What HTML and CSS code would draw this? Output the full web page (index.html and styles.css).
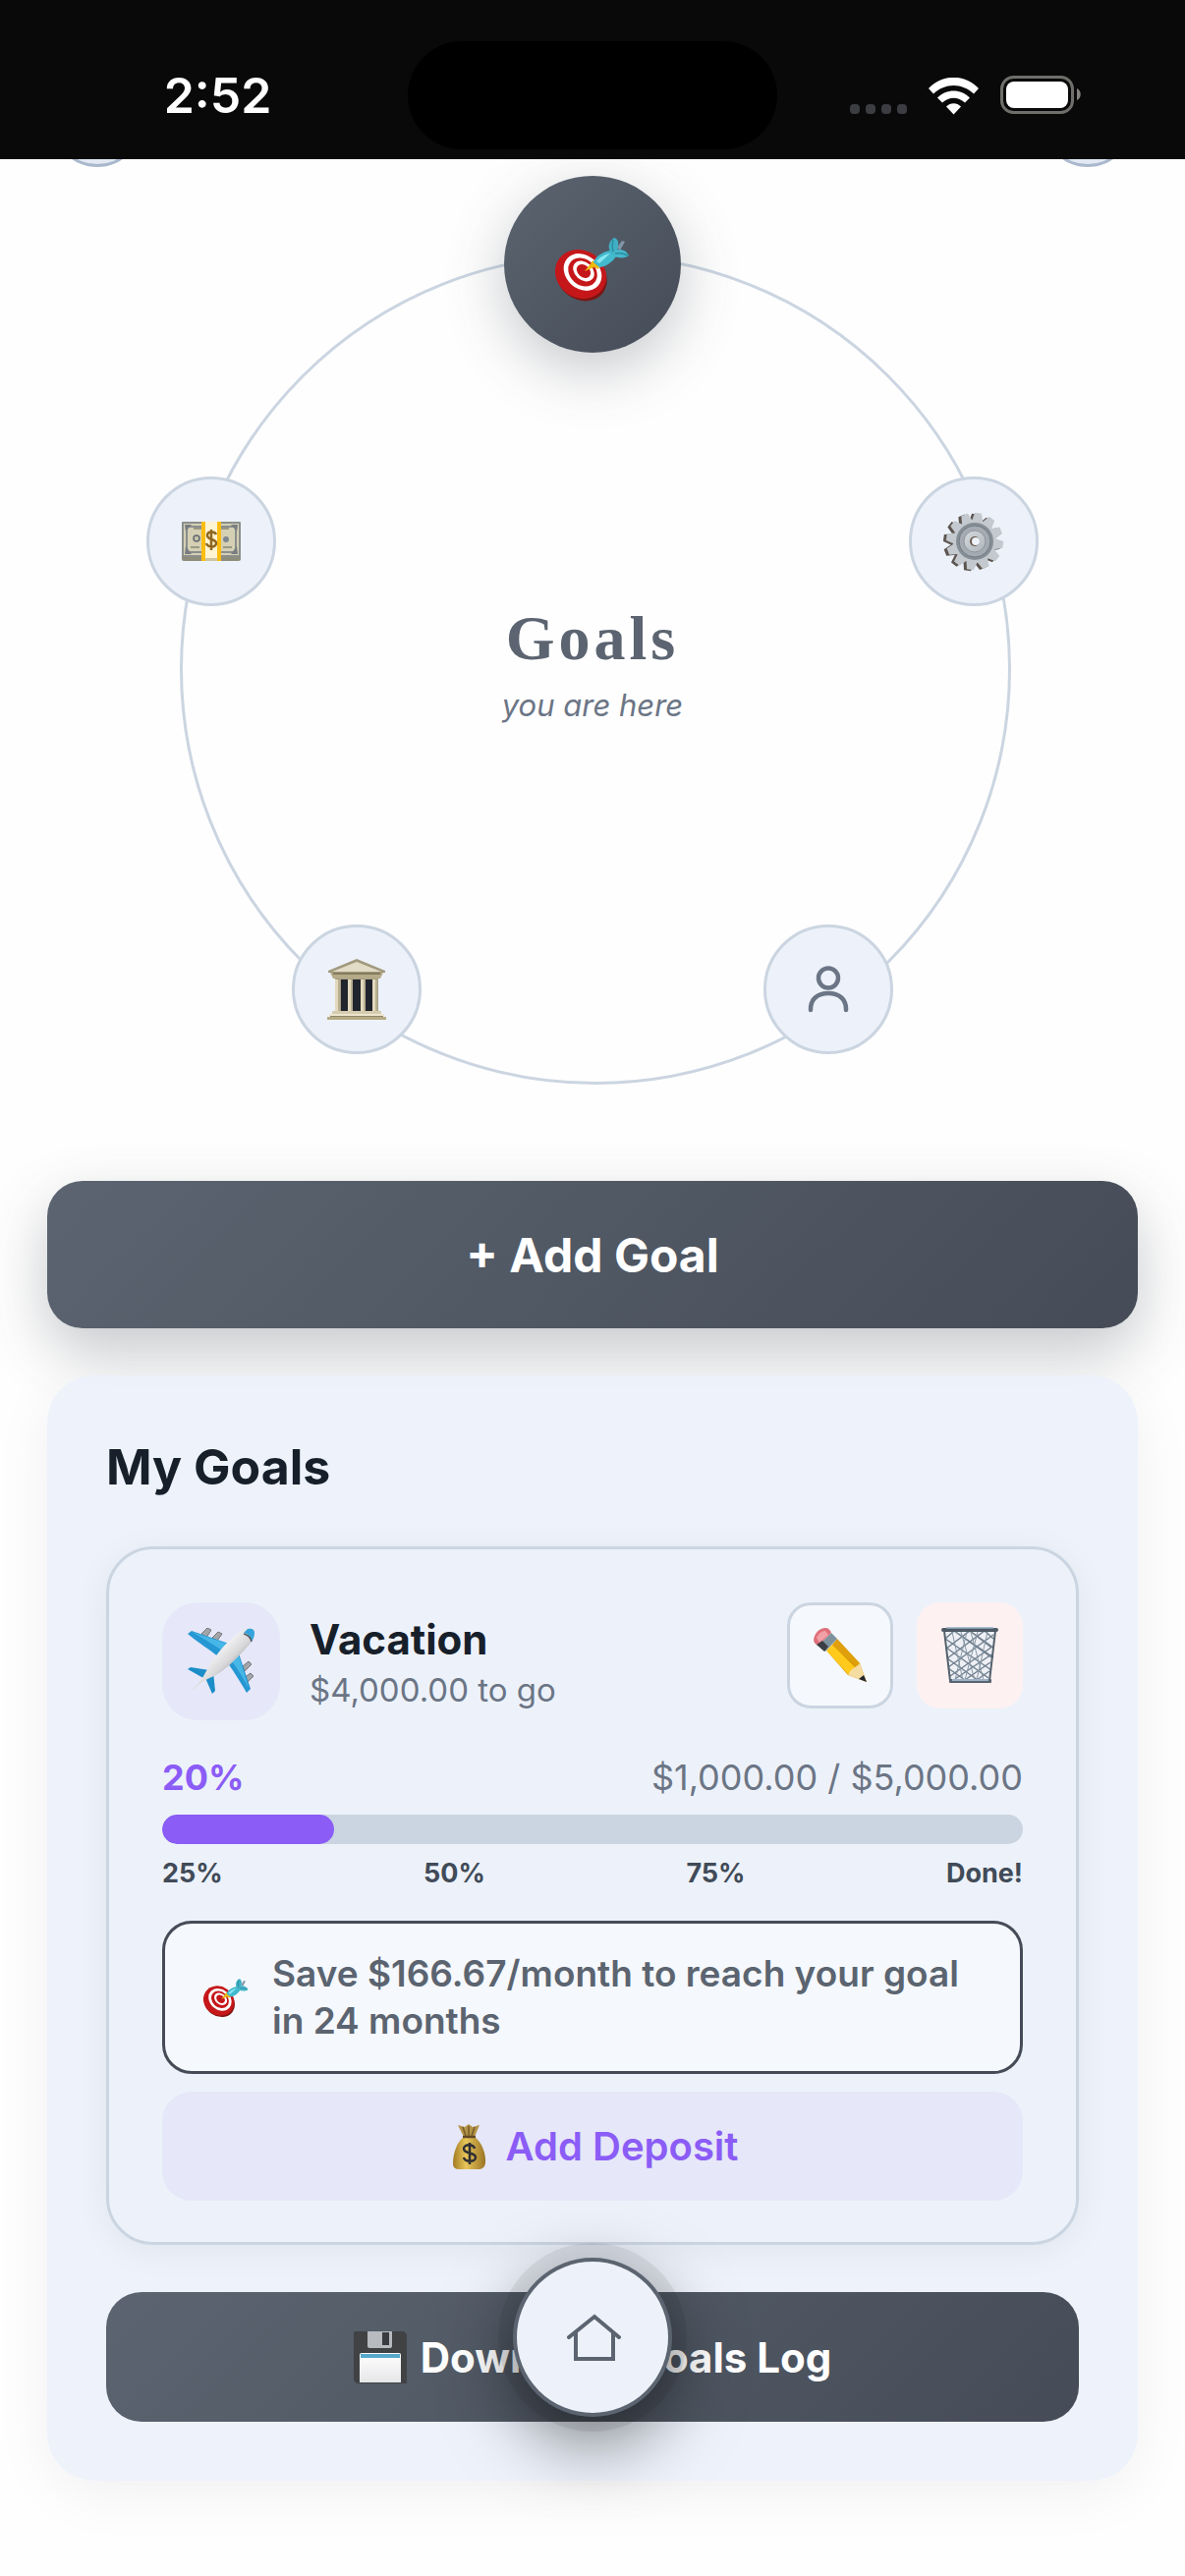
FILE: index.html
```html
<!DOCTYPE html>
<html lang="en">
<head>
    <meta charset="UTF-8">
    <meta name="viewport" content="width=device-width, initial-scale=1.0">
    <title>Goals</title>
    <link rel="stylesheet" href="styles.css">
</head>
<body>

    <!-- Shared icons and fills -->
    <svg class="sprite" width="0" height="0" aria-hidden="true">
        <defs>
            <linearGradient id="metal" x1="0" y1="0" x2="1" y2="1">
                <stop offset="0" stop-color="#d5dade"/>
                <stop offset="1" stop-color="#aeb5bb"/>
            </linearGradient>
            <linearGradient id="fuselage" x1="0" y1="0" x2="1" y2="1">
                <stop offset="0.3" stop-color="#ffffff"/>
                <stop offset="0.55" stop-color="#d8d8da"/>
                <stop offset="0.8" stop-color="#77787c"/>
            </linearGradient>
            <linearGradient id="gold" x1="0" y1="0" x2="1" y2="0">
                <stop offset="0" stop-color="#a37a22"/>
                <stop offset="0.4" stop-color="#e8c65a"/>
                <stop offset="1" stop-color="#9a7425"/>
            </linearGradient>
            <linearGradient id="paper" x1="0" y1="0" x2="0" y2="1">
                <stop offset="0" stop-color="#ffffff"/>
                <stop offset="1" stop-color="#e6e6e8"/>
            </linearGradient>
            <symbol id="target" viewBox="0 -5 76 74">
                <ellipse cx="27" cy="40" rx="27" ry="23" fill="#7d1512" transform="rotate(35 27 40)"/>
                <ellipse cx="26" cy="37" rx="27" ry="24" fill="#c5171a" transform="rotate(35 26 37)"/>
                <ellipse cx="28" cy="35" rx="21" ry="17" fill="#fff" transform="rotate(42 28 35)"/>
                <ellipse cx="28" cy="35" rx="16" ry="13" fill="#c5171a" transform="rotate(42 28 35)"/>
                <ellipse cx="29" cy="34" rx="12" ry="9" fill="#fff" transform="rotate(42 29 34)"/>
                <ellipse cx="29" cy="34" rx="8" ry="6" fill="#c5171a" transform="rotate(42 29 34)"/>
                <path d="M30 34l8-10 4 5z" fill="#edb90f"/>
                <path d="M37 24l3-1 5 6-1 3-6-3z" fill="#edb90f"/>
                <path d="M63 10l5-7 3 1-5 9z" fill="#8195a8"/>
                <path d="M39 25c1-5 9-11 18-12l5 6c-4 6-11 11-17 11z" fill="#42b9cd"/>
                <path d="M42 24c3-4 8-7 14-8l-11 10z" fill="#86e7f2"/>
                <path d="M56 14c-3-5-1-11 4-14 5 1 5 7 3 14l-4 3z" fill="#3eafc4"/>
                <path d="M59 14c6-4 13-2 16 4-5 4-11 2-15 1z" fill="#46b7cb"/>
                <path d="M59 2c-1 4-1 8 0 12M61 16c5-1 9 0 13 2" fill="none" stroke="#2b8da2" stroke-width="1.500"/>
            </symbol>
        </defs>
    </svg>

    <header class="status-bar">
        <span class="status-time">2:52</span>
        <div class="island"></div>
        <div class="status-icons">
            <svg class="signal" viewBox="0 0 58 10" fill="#3b3d42">
                <rect width="10" height="10" rx="4"/>
                <rect x="16" width="10" height="10" rx="4"/>
                <rect x="32" width="10" height="10" rx="4"/>
                <rect x="48" width="10" height="10" rx="4"/>
            </svg>
            <svg class="wifi" viewBox="0 0 51 38" fill="#fff">
                <path d="M0 11C14-4 37-4 51 11L46 16.500C34 5 17 5 5 16.500z"/>
                <path d="M9 20.500C18 11 33 11 42 20.500L37 25.500C30 19 21 19 14 25.500z"/>
                <path d="M18 29.500C22 25 29 25 33 29.500L25.500 37.500z"/>
            </svg>
            <svg class="battery" viewBox="0 0 83 40">
                <rect x="1.500" y="1.500" width="72" height="36" rx="12" fill="none" stroke="#6f6e6b" stroke-width="3"/>
                <rect x="6" y="6" width="63" height="27" rx="8" fill="#fff"/>
                <path d="M78 13c5 2 5 10 0 12z" fill="#83827f"/>
            </svg>
        </div>
    </header>

    <main>
        <nav class="orbit" aria-label="Sections">
            <span class="peek peek-left"></span>
            <span class="peek peek-right"></span>
            <div class="ring"></div>

            <div class="orbit-label">
                <h1>Goals</h1>
                <p>you are here</p>
            </div>

            <button class="node node-active" aria-label="Goals">
                <svg width="76" height="74"><use href="#target"/></svg>
            </button>
            <button class="node node-settings" aria-label="Settings">
                <svg width="62" height="62" viewBox="-31 -31 62 62">
                    <defs>
                        <path id="teeth" d="M-6-19l2-10h7l3 10zM-6 19l2 10h7l3-10zM19-6l10 2v7l-10 3zM-19-6l-10 2v7l10 3z"/>
                    </defs>
                    <g fill="#5d5550" transform="translate(-2 1) rotate(8)">
                        <circle r="21"/>
                        <use href="#teeth"/>
                        <use href="#teeth" transform="rotate(30)"/>
                        <use href="#teeth" transform="rotate(60)"/>
                    </g>
                    <g fill="#c3c9ce" transform="translate(1 0) rotate(8)">
                        <circle r="22"/>
                        <use href="#teeth"/>
                        <use href="#teeth" transform="rotate(30)"/>
                        <use href="#teeth" transform="rotate(60)"/>
                    </g>
                    <circle cx="1" r="19" fill="#858d95"/>
                    <circle cx="1" r="16" fill="#a4abb2" stroke="#737b84" stroke-width="1"/>
                    <circle cx="1" r="11" fill="url(#metal)" stroke="#8e959b" stroke-width="1"/>
                    <circle cx="1" r="5" fill="#68584d"/>
                    <circle cx="2" r="4" fill="#edf2fa"/>
                </svg>
            </button>
            <button class="node node-profile" aria-label="Profile">
                <svg width="42" height="48" viewBox="0 0 42 48" fill="none" stroke="#6b7585" stroke-width="4.500" stroke-linecap="round">
                    <circle cx="21" cy="12.500" r="10"/>
                    <path d="M3 45v-1c0-10 7-16 18-16s18 6 18 16v1"/>
                </svg>
            </button>
            <button class="node node-bank" aria-label="Bank">
                <svg width="62" height="62" viewBox="0 0 62 62">
                    <path d="M9 20h44v34H9z" fill="#a79d83"/>
                    <path d="M15 21h8v32h-8zM27 21h8v32h-8zM39 21h8v32h-8z" fill="#20242d"/>
                    <path d="M9 21h5v32H9zM22 21h5v32h-5zM35 21h5v32h-5zM47 21h5v32h-5z" fill="#e3dabd"/>
                    <path d="M12 21h2v32h-2zM25 21h2v32h-2zM38 21h2v32h-2zM50 21h2v32h-2z" fill="#b9b092"/>
                    <path d="M31 0l29 12v2H2v-2z" fill="#a2997e"/>
                    <path d="M31 3l25 10H6z" fill="#e2dbc5"/>
                    <path d="M4 14h54l-3 6H7z" fill="#b5ab88"/>
                    <path d="M7 14h48v2H7z" fill="#857b5d"/>
                    <path d="M6 53h50v3H6z" fill="#d5ccb0"/>
                    <path d="M3 56h56v2H3z" fill="#eee6ce"/>
                    <path d="M1 59h60v3H1z" fill="#b7ab85"/>
                    <path d="M4 58h54v1H4z" fill="#90866a"/>
                </svg>
            </button>
            <button class="node node-money" aria-label="Money">
                <svg width="60" height="40" viewBox="0 0 60 40">
                    <rect y="2" width="60" height="38" rx="2" fill="#8e8c7b"/>
                    <rect width="60" height="36" rx="1" fill="#8b8f8c"/>
                    <rect x="2" y="2" width="56" height="32" fill="#d5d0b4"/>
                    <path d="M5 5h50v26H5z" fill="none" stroke="#8a8e8e" stroke-width="2"/>
                    <path d="M3 3h7l-6 7zM57 3h-7l6 7zM3 33h7l-6-8zM57 33h-7l6-8z" fill="#777d82"/>
                    <path d="M12 7h8M40 7h8M9 26h9M42 26h9" stroke="#9a9982" stroke-width="2"/>
                    <circle cx="15" cy="17" r="3" fill="#c7c4ad" stroke="#63696f" stroke-width="1.500"/>
                    <circle cx="45" cy="18" r="3" fill="#7e8790"/>
                    <path d="M20 0h20v40H20z" fill="#fabd10"/>
                    <path d="M24 0h12v40H24z" fill="#fdf4d2"/>
                    <path d="M24 37h12v3H24z" fill="#cfc5a4"/>
                    <path d="M35 13c-1-3-9-4-9 1s9 3 9 8-9 4-10 0M30 8v21" fill="none" stroke="#8f6621" stroke-width="2.500"/>
                </svg>
            </button>
        </nav>

        <div class="content">
            <button class="primary-btn add-goal-btn">+ Add Goal</button>

            <section class="goals-card">
                <h2>My Goals</h2>

                <article class="goal">
                    <div class="goal-header">
                        <div class="goal-icon">
                            <svg width="68" height="68" viewBox="0 0 68 68">
                                <g fill="#a3a5a8" stroke="#737579" stroke-width="1">
                                    <path d="M14 6l6-6 4 2-5 8zM25 10l6-6 4 2-5 7zM56 39l6-5 3 3-7 7zM57 51l7-5 3 3-7 7z"/>
                                </g>
                                <path d="M0 6l4-3 41 14-13 13C21 21 12 16 0 6zM60 66l4-4-13-39-13 9c6 8 14 20 22 34z" fill="#2597d2"/>
                                <path d="M4 4l39 13-8 6C25 16 15 10 4 4zM62 61L51 25l-8 7c7 8 13 18 19 29z" fill="#47b7e8"/>
                                <path d="M0 42l3-2 19 3-6 8zM25 67l3-3-2-19-8 6z" fill="#1b8dc8"/>
                                <path d="M5 62c8-7 12-14 16-22C30 25 44 9 56 2c6-3 11-2 12 2 0 6-3 11-9 17C48 33 37 44 27 49 19 52 12 56 6 63z" fill="url(#fuselage)"/>
                                <path d="M61 1c5-1 7 1 7 4 0 3-1 6-3 9-1-5-3-8-8-9" fill="#35a4dc"/>
                                <path d="M57 6c4 1 7 4 8 8" fill="none" stroke="#55585c" stroke-width="1.500"/>
                            </svg>
                        </div>
                        <div class="goal-title">
                            <h3>Vacation</h3>
                            <p>$4,000.00 to go</p>
                        </div>
                        <div class="goal-actions">
                            <button class="icon-btn edit-btn" aria-label="Edit goal">
                                <svg width="56" height="56" viewBox="0 0 56 56">
                                    <path d="M15 24L25 11l23 25 7 19-19-7z" fill="#d99a08"/>
                                    <path d="M14 23l6-6 26 26-10 4z" fill="#ffca1b"/>
                                    <path d="M20 17l5-5 23 24-2 4z" fill="#e0a00b"/>
                                    <path d="M36 48l3-5 7-5 2-2 7 19z" fill="#f5dca0"/>
                                    <path d="M47 52l5-4 3 7z" fill="#23262d"/>
                                    <path d="M1 12C2 5 7 0 13 0c3 0 5 2 6 5L6 18c-3-1-5-3-5-6z" fill="#df6f79"/>
                                    <path d="M4 10c2-4 5-7 9-7l3 4L7 15z" fill="#f1a0a6"/>
                                    <path d="M6 18L19 5l6 6-12 13z" fill="#7e929d"/>
                                    <path d="M4 17l6-4 6 6-4 5z" fill="#3b3f45"/>
                                </svg>
                            </button>
                            <button class="icon-btn delete-btn" aria-label="Delete goal">
                                <svg width="58" height="58" viewBox="0 0 58 58" fill="none">
                                    <path d="M3 4l6 51h40l6-51z" fill="#eef0f5"/>
                                    <path d="M4 12l9-8 38 27M5 22L29 4l22 17M6 32L44 4l9 8M7 41L53 8M9 50L52 20M14 53l37-25M24 54l26-18M36 54l13-9M13 4l40 27M4 12l47 32M5 21l43 31M6 32l31 22M7 42l17 12M29 4l24 17M44 4l9 8" stroke="#71808f" stroke-width="1.500"/>
                                    <path d="M11 5l11 49M20 5l14 49M30 5l13 49M47 5L36 54M37 5L24 54M26 5L14 54" stroke="#8796a4" stroke-width="1"/>
                                    <path d="M3 4l6 51M55 4l-6 51" stroke="#52606c" stroke-width="2"/>
                                    <rect y="1" width="58" height="4" rx="2" fill="#4e5a66"/>
                                    <path d="M5 1h48" stroke="#93adc3" stroke-width="1.500"/>
                                    <rect x="8" y="53" width="43" height="4" rx="1" fill="#586572"/>
                                    <path d="M11 54h37" stroke="#b7cbe0" stroke-width="1.500"/>
                                </svg>
                            </button>
                        </div>
                    </div>

                    <div class="progress-info">
                        <span class="percent">20%</span>
                        <span class="amount">$1,000.00 / $5,000.00</span>
                    </div>
                    <div class="progress" role="progressbar" aria-label="Vacation" aria-valuenow="20" aria-valuemin="0" aria-valuemax="100">
                        <div class="progress-fill" style="width: 20%"></div>
                    </div>
                    <div class="milestones">
                        <span>25%</span>
                        <span>50%</span>
                        <span>75%</span>
                        <span>Done!</span>
                    </div>

                    <div class="tip">
                        <svg width="46" height="45"><use href="#target"/></svg>
                        <p>Save $166.67/month to reach your goal in 24 months</p>
                    </div>

                    <button class="deposit-btn">
                        <svg width="46" height="46" viewBox="0 0 46 46">
                            <path d="M11 1l7 2 4-3 4 3 7-2-5 12H17z" fill="#b49448"/>
                            <path d="M16 3l3 9M22 2v10M28 3l-3 9" stroke="#76592b" stroke-width="1.500"/>
                            <path d="M17 13h11c7 5 12 17 11 27-1 4-3 6-8 6H13c-5 0-7-2-7-6 0-10 4-22 11-27z" fill="url(#gold)"/>
                            <path d="M16 13h13" stroke="#624827" stroke-width="2.500"/>
                            <path d="M28 25c-1-5-11-5-11 0 0 6 12 3 12 9 0 5-11 5-12 0M23 19v22" fill="none" stroke="#303033" stroke-width="2.500"/>
                        </svg>
                        Add Deposit
                    </button>
                </article>

                <button class="primary-btn download-btn">
                    <svg width="54" height="54" viewBox="0 0 54 54">
                        <path d="M1 1h50l3 3v50H3l-3-3V2z" fill="#414244"/>
                        <path d="M14 1h25v15q0 2-2 2H16q-2 0-2-2z" fill="#b7bbc0"/>
                        <path d="M29 2h7v13h-7z" fill="#3a3b3e"/>
                        <path d="M6 25q0-2 2-2h38q2 0 2 2v28H6z" fill="url(#paper)"/>
                        <path d="M7 24h40v4H7z" fill="#55a9cb"/>
                    </svg>
                    Download Goals Log
                </button>
            </section>
        </div>
    </main>

    <a class="home-fab" href="#" aria-label="Home">
        <svg width="58" height="50" viewBox="0 0 58 50" fill="none" stroke="#5b6470" stroke-width="4">
            <path d="M5 25L31 4l25 21" stroke-linecap="round"/>
            <path d="M12 20v27h38V20"/>
        </svg>
    </a>

</body>
</html>
```
FILE: styles.css
```css
:root {
    --slate: #5b6470;
    --slate-dark: #454c57;
    --surface: #edf2fa;
    --surface-light: #f5f8fc;
    --border: #cbd5e1;
    --text: #17202a;
    --muted: #6b7585;
    --violet: #8b5cf6;
    --violet-light: #e6e7f8;
    --gradient: linear-gradient(135deg, var(--slate), var(--slate-dark));
}

* {
    box-sizing: border-box;
}

body {
    margin: 0;
    font-family: 'Inter', sans-serif;
    background-color: #fefefe;
    color: var(--text);
}

h1, h2, h3, p {
    margin: 0;
}

button {
    padding: 0;
    border: none;
    font-family: inherit;
    cursor: pointer;
}

svg {
    display: block;
    flex-shrink: 0;
}

.sprite {
    position: absolute;
}

/* Status bar */
.status-bar {
    position: sticky;
    top: 0;
    z-index: 10;
    display: grid;
    grid-template-columns: 1fr 376px 1fr;
    align-items: center;
    height: 162px;
    padding-top: 32px;
    background-color: #090909;
    border-bottom: 1px solid #000;
    color: #fff;
}

.status-time {
    padding-left: 28px;
    font-size: 50px;
    font-weight: 600;
    text-align: center;
}

.island {
    height: 110px;
    border-radius: 55px;
    background-color: #000;
}

.status-icons {
    display: flex;
    justify-content: flex-end;
    align-items: flex-end;
    gap: 22px;
    padding-right: 105px;
}

.signal {
    width: 58px;
    height: 12px;
}

.wifi {
    width: 51px;
    height: 38px;
}

.battery {
    width: 83px;
    height: 40px;
}

/* Orbit navigation */
.orbit {
    position: relative;
    display: flex;
    justify-content: center;
    align-items: center;
    height: 1040px;
    padding-bottom: 8px;
}

.ring {
    position: absolute;
    top: 96px;
    left: calc(50% - 420px);
    width: 846px;
    height: 846px;
    border: 3px solid var(--border);
    border-radius: 50%;
}

.peek {
    position: absolute;
    top: -84px;
    width: 92px;
    height: 92px;
    border: 3px solid #a9b8cd;
    border-radius: 50%;
    background-color: #e2e9f2;
}

.peek-left {
    left: 53px;
}

.peek-right {
    right: 53px;
}

.orbit-label {
    text-align: center;
}

.orbit-label h1 {
    margin-bottom: 8px;
    font-family: 'Liberation Serif', serif;
    font-size: 64px;
    line-height: 72px;
    letter-spacing: 4px;
    color: var(--slate);
}

.orbit-label p {
    font-size: 31px;
    line-height: 48px;
    font-style: italic;
    color: var(--muted);
}

.node {
    position: absolute;
    display: flex;
    justify-content: center;
    align-items: center;
    width: 132px;
    height: 132px;
    border: 3px solid var(--border);
    border-radius: 50%;
    background-color: var(--surface);
}

.node-active {
    top: 17px;
    left: calc(50% - 90px);
    width: 180px;
    height: 180px;
    padding-top: 10px;
    border: none;
    background: var(--gradient);
    box-shadow: 0 18px 60px rgba(69, 76, 87, 0.3);
}

.node-settings {
    top: 323px;
    left: calc(50% + 322px);
}

.node-profile {
    top: 779px;
    left: calc(50% + 174px);
}

.node-bank {
    top: 779px;
    left: calc(50% - 306px);
}

.node-money {
    top: 323px;
    left: calc(50% - 454px);
}

/* Page content */
.content {
    display: flex;
    flex-direction: column;
    gap: 48px;
    padding: 0 48px 96px;
}

.primary-btn {
    display: flex;
    justify-content: center;
    align-items: center;
    width: 100%;
    border-radius: 36px;
    background: var(--gradient);
    color: #fff;
    font-weight: 700;
}

.add-goal-btn {
    height: 150px;
    font-size: 48px;
    box-shadow: 0 24px 60px rgba(69, 76, 87, 0.3);
}

.goals-card {
    padding: 60px;
    border-radius: 48px;
    background-color: rgba(234, 240, 250, 0.88);
    box-shadow: 0 12px 60px rgba(0, 0, 0, 0.06);
}

.goals-card h2 {
    margin-bottom: 48px;
    font-size: 50px;
    line-height: 66px;
}

.goal {
    margin-bottom: 48px;
    padding: 54px 54px 42px;
    border: 3px solid var(--border);
    border-radius: 48px;
    background-color: var(--surface);
    box-shadow: 0 6px 36px rgba(0, 0, 0, 0.06);
}

.goal-header {
    display: flex;
    align-items: flex-start;
    gap: 30px;
    margin-bottom: 34px;
}

.goal-icon {
    display: flex;
    justify-content: center;
    align-items: center;
    width: 120px;
    height: 120px;
    border-radius: 36px;
    background-color: var(--violet-light);
}

.goal-title {
    flex: 1;
    padding-top: 11px;
}

.goal-title h3 {
    font-size: 42px;
    line-height: 54px;
}

.goal-title p {
    font-size: 33px;
    line-height: 48px;
    color: var(--muted);
}

.goal-actions {
    display: flex;
    gap: 24px;
}

.icon-btn {
    display: flex;
    justify-content: center;
    align-items: center;
    width: 108px;
    height: 108px;
    border-radius: 24px;
}

.edit-btn {
    border: 3px solid var(--border);
    background-color: var(--surface-light);
}

.delete-btn {
    background-color: #fef1f1;
}

.progress-info {
    display: flex;
    justify-content: space-between;
    margin-bottom: 14px;
    font-size: 36px;
    line-height: 48px;
}

.percent {
    font-weight: 700;
    color: var(--violet);
}

.amount {
    color: var(--muted);
}

.progress {
    height: 30px;
    border-radius: 15px;
    background-color: var(--border);
    overflow: hidden;
}

.progress-fill {
    height: 100%;
    border-radius: 15px;
    background-color: var(--violet);
}

.milestones {
    display: flex;
    justify-content: space-between;
    margin: 12px 0 30px;
    font-size: 27px;
    font-weight: 700;
    line-height: 36px;
    color: #414b58;
}

.tip {
    display: flex;
    align-items: center;
    gap: 24px;
    margin-bottom: 18px;
    padding: 27px 39px;
    border: 3px solid var(--slate-dark);
    border-radius: 30px;
    background-color: var(--surface-light);
    font-size: 37px;
    font-weight: 600;
    line-height: 48px;
    color: var(--slate);
}

.deposit-btn {
    display: flex;
    justify-content: center;
    align-items: center;
    gap: 14px;
    width: 100%;
    height: 111px;
    border-radius: 30px;
    background-color: var(--violet-light);
    font-size: 40px;
    font-weight: 600;
    color: var(--violet);
}

.download-btn {
    gap: 14px;
    height: 132px;
    font-size: 42px;
}

/* Floating home button */
.home-fab {
    position: fixed;
    bottom: 162px;
    left: calc(50% - 81px);
    display: flex;
    justify-content: center;
    align-items: center;
    width: 162px;
    height: 162px;
    border: 4px solid var(--slate);
    border-radius: 50%;
    background-color: var(--surface);
    box-shadow: 0 0 0 15px rgba(0, 0, 0, 0.07), 0 24px 72px rgba(0, 0, 0, 0.5);
}
```
